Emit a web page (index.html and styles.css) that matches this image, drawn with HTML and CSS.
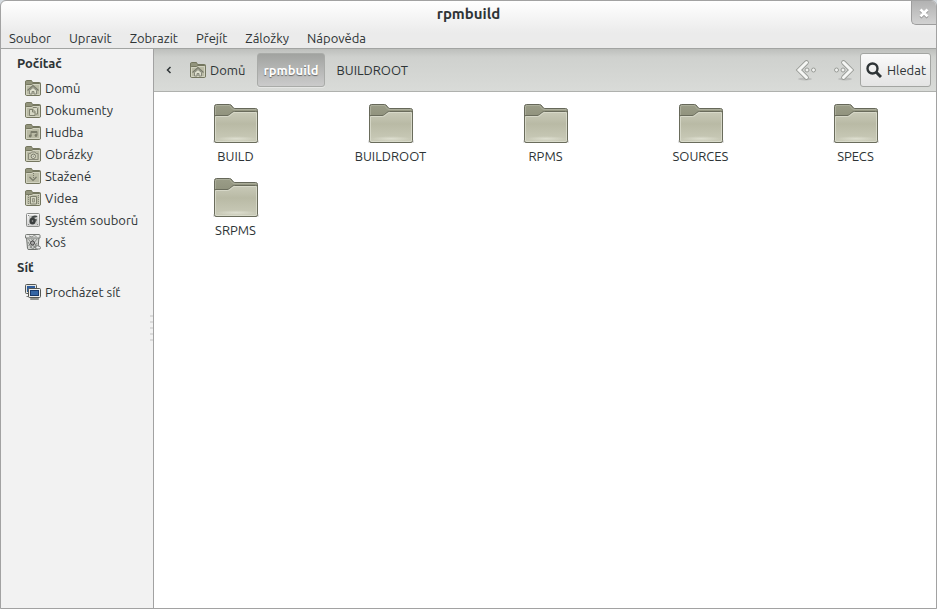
FILE: index.html
```html
<!DOCTYPE html>
<html lang="cs">
<head>
<meta charset="utf-8">
<title>rpmbuild</title>
<link rel="stylesheet" href="styles.css">
</head>
<body>
<svg class="defs" aria-hidden="true">
  <defs>
    <linearGradient id="g-front" x1="0" y1="0" x2="0" y2="1">
      <stop offset="0" stop-color="#c9cab8"/><stop offset=".4" stop-color="#b9baa5"/><stop offset="1" stop-color="#cbccba"/>
    </linearGradient>
    <linearGradient id="g-back" x1="0" y1="0" x2="0" y2="1">
      <stop offset="0" stop-color="#9b9d88"/><stop offset="1" stop-color="#7c7e68"/>
    </linearGradient>
    <radialGradient id="g-glow" cx=".5" cy=".9" r=".5" gradientTransform="translate(0 .66) scale(1 .25)">
      <stop offset="0" stop-color="#e8e9dc" stop-opacity=".7"/><stop offset="1" stop-color="#e8e9dc" stop-opacity="0"/>
    </radialGradient>
    <linearGradient id="g-metal" x1="0" y1="0" x2="0" y2="1">
      <stop offset="0" stop-color="#f8f8f8"/><stop offset="1" stop-color="#d0d0d0"/>
    </linearGradient>
  </defs>
  <symbol id="folder" viewBox="0 0 48 42">
    <rect x="1" y="38" width="46" height="3" rx="1" fill="#000" opacity=".12"/>
    <path d="M2.500 37V4.500q0-2 2-2h13q1 0 1.500.5l2.500 3q.5.500 1.500.5h20.500q2 0 2 2V37z" fill="url(#g-back)" stroke="#66685a"/>
    <path d="M3.500 13V5q0-1.500 1.500-1.500h12.500l3 3.500q.5.500 1.500.5h22.500" fill="none" stroke="#b0b29f" stroke-width=".8"/>
    <path d="M2.500 38.500V15q0-1.500 1.500-1.500h11q1.500 0 2.500-1l2.500-2q1-1 2.500-1h21q2 0 2 1.500v27.500q0 2-1.500 2H4q-1.500 0-1.500-2z" fill="url(#g-front)" stroke="#6a6c5c"/>
    <path d="M3.500 38V14.500h12q1.500 0 2.500-1l3-2.500q1-.5 2-.5h21.500V38q0 1.500-1 1.500H4.500q-1 0-1-1.500z" fill="none" stroke="#dcddce" stroke-width=".8"/>
    <rect x="4" y="19" width="40" height="20" fill="url(#g-glow)"/>
  </symbol>
  <symbol id="mini" viewBox="0 0 16 16">
    <path d="M.5 14V2q0-1.500 1-1.500h5l1 2h7q1 0 1 1V14z" fill="#92947c" stroke="#74765f"/>
    <path d="M.5 14V5.500q0-1 1-1h5l1.500-1h6.500q1 0 1 1V14q0 1.500-1 1.500h-13q-1 0-1-1.500z" fill="#babba5" stroke="#74765f"/>
    <path d="M1.500 14.500v-9h5.500l1-1h6.500v10z" fill="none" stroke="#d2d3c1"/>
  </symbol>
  <symbol id="home" viewBox="0 0 16 16">
    <use href="#mini"/>
    <path d="M4.500 10.500v3.500h2.500v-2.500h2V14h2.500v-3.500L8 7.500z" fill="#dfe0ce" stroke="#85877a"/>
    <path d="M2.500 10.500L8 5.500l5.500 5" fill="none" stroke="#77796a" stroke-width="1.200"/>
  </symbol>
  <symbol id="docs" viewBox="0 0 16 16">
    <use href="#mini"/>
    <path d="M8 5.500h3.500l1 1V12H11M4.500 7.500H8l2 2v4H4.500z" fill="#d6d7c4" stroke="#7e806e"/>
    <path d="M7.500 7.500V10H10" fill="none" stroke="#7e806e"/>
  </symbol>
  <symbol id="music" viewBox="0 0 16 16">
    <use href="#mini"/>
    <path d="M6 12V7.500h6V11M6 8.500h6" fill="none" stroke="#7a7c6a"/>
    <circle cx="5.200" cy="12" r="1.400" fill="#7a7c6a"/><circle cx="11" cy="11.500" r="1.400" fill="#7a7c6a"/>
  </symbol>
  <symbol id="photo" viewBox="0 0 16 16">
    <use href="#mini"/>
    <path d="M3.500 7.500h2l1-1.500h3.500l1 1.500h2v6h-9.500z" fill="#c8c9b4" stroke="#88897a"/>
    <circle cx="8.300" cy="10.300" r="2.200" fill="#dedfcc" stroke="#77796a"/><circle cx="8.300" cy="10.300" r=".7" fill="#88897a"/>
  </symbol>
  <symbol id="down" viewBox="0 0 16 16">
    <use href="#mini"/>
    <path d="M4.500 9L8 12.500 11.500 9" fill="none" stroke="#77796a" stroke-width="1.200"/>
    <path d="M8 5h1v1H8zM8 7h1v1H8zM8 9h1v1H8z" fill="#77796a"/>
  </symbol>
  <symbol id="video" viewBox="0 0 16 16">
    <use href="#mini"/>
    <path d="M3.500 5v10M13.500 5v10" stroke="#85877a" stroke-dasharray="1 1"/>
    <path d="M5.500 6.500h6v7.500h-6z" fill="#d6d7c4" stroke="#7e806e"/><path d="M7.500 8.500h2V12h-2z" fill="#bfc0aa" stroke="#85877a" stroke-width=".8"/>
  </symbol>
  <symbol id="disk" viewBox="0 0 16 16">
    <rect x="1.500" y="1.500" width="13" height="13" rx="1" fill="url(#g-metal)" stroke="#8b8d8a"/>
    <path d="M4 3.500h8.500v9H4z" fill="#c6c8c5"/>
    <ellipse cx="7.500" cy="9" rx="3" ry="3.500" fill="#3a3e3e"/>
    <path d="M6 5q3-2.500 6.500-1-.5 1.500-5 2zM10 7l2 .5-1.500 3z" fill="#444848"/>
    <circle cx="7.500" cy="9" r=".8" fill="#b0b0b0"/>
    <path d="M3 3h1v1H3zM12 12h1v1h-1zM3 12h1v1H3z" fill="#888"/>
  </symbol>
  <symbol id="trash" viewBox="0 0 16 16">
    <path d="M1.500 3l1 11.500q0 1 1.500 1h7.500q1.500 0 1.500-1L14 3z" fill="#d0d2cf" stroke="#6d706c"/>
    <path d="M3.500 5l6.500 9M6.500 5l5 7M3 8l4.500 7M12 5l-7 9M9 5l-5.500 7M12 9l-4 6" stroke="#6d706d" stroke-width=".7"/>
    <path d="M.5 1.500q0-1 1-1h12.500q1 0 1 1v2.500H.5z" fill="#e7e8e6" stroke="#777a76"/>
    <path d="M4 2l3 1 2-1.500 2.500 1" fill="none" stroke="#8c8f8b"/>
    <circle cx="7.500" cy="9" r="2" fill="#aaa" stroke="#333" stroke-width=".8"/>
    <path d="M10.500 12.500q2-1.500 4.500 0 1 1 0 2.500h-4z" fill="#ededed" stroke="#777a76"/>
  </symbol>
  <symbol id="network" viewBox="0 0 16 16">
    <rect x=".5" y=".5" width="11" height="9" rx="1" fill="#e5e6e2" stroke="#555753"/>
    <rect x="2" y="2" width="8" height="6" fill="#2e5c9c"/>
    <path d="M1.500 12.500h4" stroke="#777"/>
    <rect x="3.500" y="4.500" width="12" height="9" rx="1" fill="#eeeeec" stroke="#555753"/>
    <rect x="5.500" y="6.500" width="8" height="5" fill="#3465a4" stroke="#17386b"/>
    <path d="M5.500 14.500h8v1h-8z" fill="#ddd" stroke="#777a76" stroke-width=".8"/>
  </symbol>
  <symbol id="go" viewBox="0 0 24 22">
    <ellipse cx="10" cy="20" rx="7" ry="1.500" fill="#000" opacity=".12"/>
    <path d="M11.500 3.500L4 11l7.500 7.500" fill="none" stroke="#969994" stroke-width="4.600" stroke-linecap="round"/>
    <path d="M11.500 3.500L4 11l7.500 7.500" fill="none" stroke="#f5f6f4" stroke-width="3" stroke-linecap="round"/>
    <circle cx="12" cy="11" r="2" fill="#f0f1ef" stroke="#929590" stroke-width=".9"/>
    <circle cx="18.500" cy="11" r="2" fill="#f0f1ef" stroke="#929590" stroke-width=".9"/>
  </symbol>
</svg>
<div class="window">
  <header class="titlebar">
    <h1>rpmbuild</h1>
    <button class="close" aria-label="Zavřít"><svg width="10" height="10" viewBox="0 0 10 10"><path d="M1.500 1.500l7 7M8.500 1.500l-7 7" fill="none" stroke="#fff" stroke-width="2.600"/></svg></button>
  </header>
  <nav class="menubar">
    <button>Soubor</button><button>Upravit</button><button>Zobrazit</button><button>Přejít</button><button>Záložky</button><button>Nápověda</button>
  </nav>
  <div class="body">
    <aside class="sidebar">
      <h2>Počítač</h2>
      <ul>
        <li><a href="#"><svg class="icon"><use href="#home"/></svg>Domů</a></li>
        <li><a href="#"><svg class="icon"><use href="#docs"/></svg>Dokumenty</a></li>
        <li><a href="#"><svg class="icon"><use href="#music"/></svg>Hudba</a></li>
        <li><a href="#"><svg class="icon"><use href="#photo"/></svg>Obrázky</a></li>
        <li><a href="#"><svg class="icon"><use href="#down"/></svg>Stažené</a></li>
        <li><a href="#"><svg class="icon"><use href="#video"/></svg>Videa</a></li>
        <li><a href="#"><svg class="icon"><use href="#disk"/></svg>Systém souborů</a></li>
        <li><a href="#"><svg class="icon"><use href="#trash"/></svg>Koš</a></li>
      </ul>
      <h2>Síť</h2>
      <ul>
        <li><a href="#"><svg class="icon"><use href="#network"/></svg>Procházet síť</a></li>
      </ul>
      <div class="grip"><i></i><i></i><i></i><i></i><i></i></div>
    </aside>
    <main class="main">
      <div class="toolbar">
        <button class="scroll" aria-label="Předchozí"><svg width="6" height="8" viewBox="0 0 6 8"><path d="M4.500 1L1.500 4l3 3" fill="none" stroke="#2e3436" stroke-width="1.500"/></svg></button>
        <button class="crumb"><svg class="icon"><use href="#home"/></svg>Domů</button>
        <button class="crumb active">rpmbuild</button>
        <button class="crumb">BUILDROOT</button>
        <div class="actions">
          <button class="go" aria-label="Zpět"><svg width="24" height="22"><use href="#go"/></svg></button>
          <button class="go forward" aria-label="Vpřed"><svg width="24" height="22"><use href="#go"/></svg></button>
          <button class="search"><svg width="16" height="16" viewBox="0 0 16 16"><circle cx="6.500" cy="6.500" r="5" fill="none" stroke="#2e3436" stroke-width="2.400"/><path d="M10 10l5 5" stroke="#2e3436" stroke-width="3"/></svg>Hledat</button>
        </div>
      </div>
      <div class="files">
        <a href="#"><svg><use href="#folder"/></svg>BUILD</a>
        <a href="#"><svg><use href="#folder"/></svg>BUILDROOT</a>
        <a href="#"><svg><use href="#folder"/></svg>RPMS</a>
        <a href="#"><svg><use href="#folder"/></svg>SOURCES</a>
        <a href="#"><svg><use href="#folder"/></svg>SPECS</a>
        <a href="#"><svg><use href="#folder"/></svg>SRPMS</a>
      </div>
    </main>
  </div>
</div>
</body>
</html>
```
FILE: styles.css
```css
* { box-sizing: border-box; }
body {
  margin: 0;
  background: #d5dbe0;
  color: #2e3436;
  font: 13px/20px Ubuntu, "Noto Sans", sans-serif;
}
button {
  margin: 0;
  padding: 0;
  border: 0;
  background: none;
  color: inherit;
  font: inherit;
}
a { color: inherit; text-decoration: none; }
h1, h2, ul { margin: 0; padding: 0; }
svg { flex: none; }
.defs { position: absolute; width: 0; height: 0; }
.window {
  display: flex;
  flex-direction: column;
  min-height: 100vh;
  overflow: hidden;
  border: 1px solid #a2a2a2;
  border-radius: 6px 6px 0 0;
  background: linear-gradient(#fff, #ebebeb 32px, #ebebeb);
}
.titlebar { position: relative; height: 27px; }
.titlebar h1 {
  font-size: 15px;
  line-height: 26px;
  text-align: center;
}
.close {
  position: absolute;
  top: 0;
  right: 0;
  display: flex;
  align-items: center;
  justify-content: center;
  width: 25px;
  height: 24px;
  border: solid #9d9d9d;
  border-width: 0 0 1px 1px;
  border-radius: 0 0 0 5px;
  background: linear-gradient(#b2b2b2, #d2d2d2);
}
.close svg { filter: drop-shadow(0 1px 0 #888); }
.menubar {
  display: flex;
  gap: 18px;
  height: 21px;
  padding-left: 8px;
  border-bottom: 1px solid #a2a4a2;
}
.body { display: flex; flex: 1; }
.sidebar {
  position: relative;
  flex: none;
  width: 153px;
  border-right: 1px solid #a2a2a2;
  background: #f2f2f2;
}
.sidebar h2 {
  padding-left: 16px;
  font-size: 13px;
  line-height: 28px;
}
.sidebar ul { list-style: none; }
.sidebar a {
  display: flex;
  align-items: center;
  gap: 4px;
  height: 22px;
  padding-left: 24px;
  white-space: nowrap;
}
.icon { width: 16px; height: 16px; }
.grip {
  position: absolute;
  top: 266px;
  right: 0;
  display: grid;
  gap: 4px;
}
.grip i { width: 3px; height: 2px; background: #dadada; }
.main { flex: 1; min-width: 0; background: #fff; }
.toolbar {
  display: flex;
  align-items: center;
  height: 43px;
  padding: 0 5px;
  border-bottom: 1px solid #afb1ae;
  background: linear-gradient(#bdbfbc, #cfd1ce 8px, #d9dbd8);
}
.scroll { display: flex; justify-content: center; width: 19px; }
.crumb {
  display: flex;
  align-items: center;
  gap: 4px;
  height: 34px;
  padding: 0 12px;
}
.crumb.active {
  padding: 0 5px;
  border: 1px solid #a9aba8;
  border-radius: 3px;
  background: linear-gradient(#a1a3a0, #cbcbcb);
  box-shadow: 0 1px 0 #e6e7e5;
  color: #fff;
  font-weight: bold;
  text-shadow: 0 1px 1px #666;
}
.actions {
  display: flex;
  align-items: center;
  gap: 12px;
  margin-left: auto;
}
.go { display: flex; }
.forward svg { transform: scaleX(-1); }
.search {
  display: flex;
  align-items: center;
  gap: 5px;
  height: 34px;
  margin-left: -7px;
  padding: 0 4px 0 5px;
  border: 1px solid #a3a5a2;
  border-radius: 3px;
  background: linear-gradient(#fafafa, #e4e4e4);
}
.files {
  display: grid;
  grid-template-columns: repeat(auto-fill, 155px);
  grid-auto-rows: 74px;
  padding: 10px 0 10px 4px;
}
.files a {
  display: flex;
  flex-direction: column;
  align-items: center;
  gap: 2px;
}
.files svg { width: 48px; height: 42px; }
```
